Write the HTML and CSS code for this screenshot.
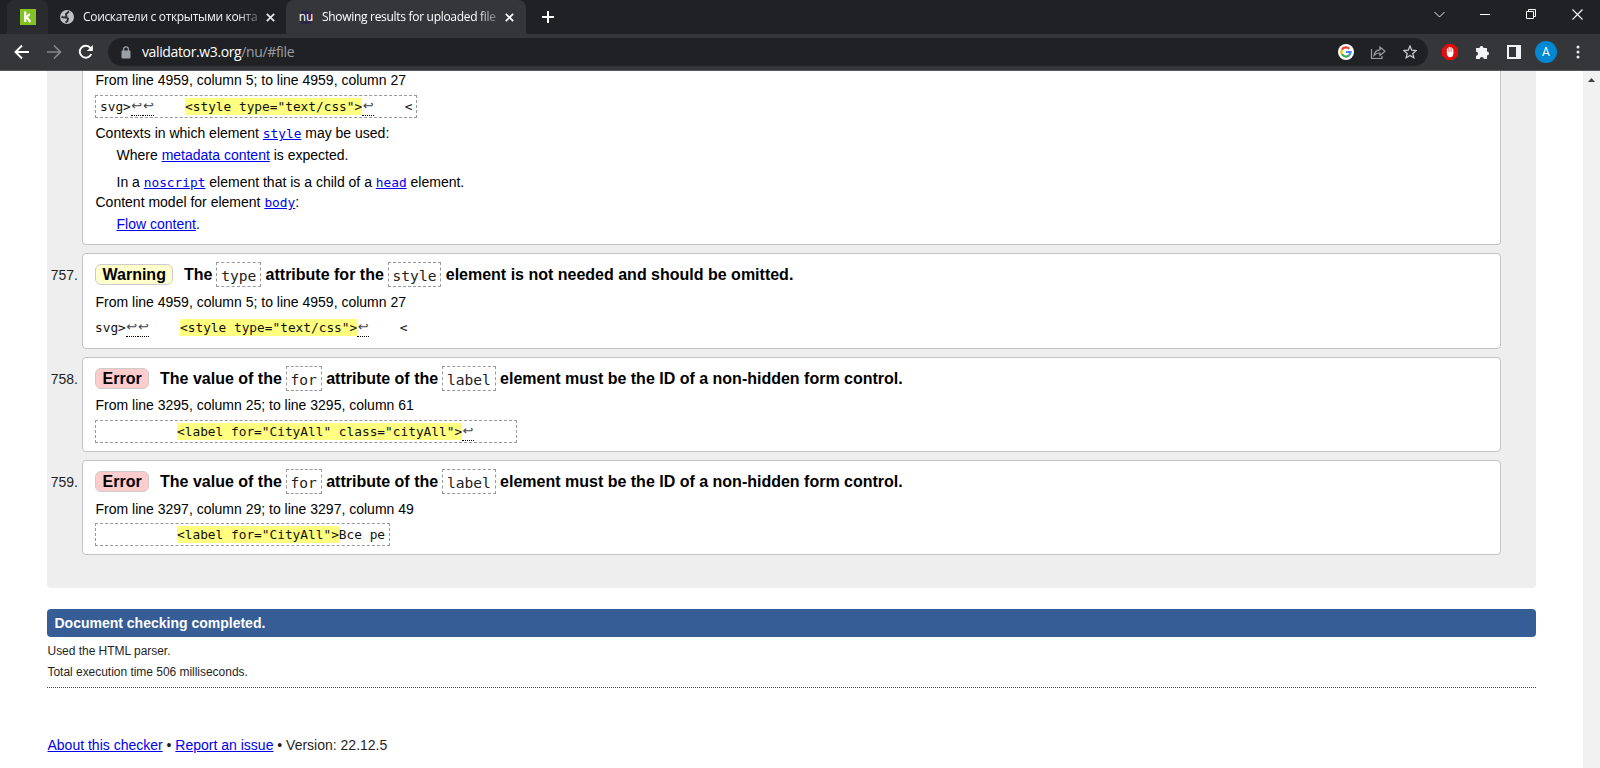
FILE: index.html
```html
<!DOCTYPE html>
<html lang="en">
<head>
<meta charset="utf-8">
<title>Showing results for uploaded file</title>
<link rel="stylesheet" href="styles.css">
</head>
<body>
<div class="browser">
  <header class="tabstrip">
    <div class="tab-pinned"><svg width="16" height="16" viewBox="0 0 16 16"><rect width="16" height="16" fill="#84c225"/><path d="M5.2 2.5V13M5.5 9l4.300-4M6.600 8l3.700 5" stroke="#fff" stroke-width="2.200" fill="none"/></svg></div>
    <div class="tab-idle">
      <svg width="14" height="14" viewBox="0 0 14 14"><circle cx="7" cy="7" r="7" fill="#bdc1c6"/><path d="M1.500 6.500q3 2.200 5 0l-.5-2.500 3-2.500M5 7l3 1.500-.5 2.500-2 1.500" stroke="#2b2c2f" stroke-width="1.900" fill="none"/></svg>
      <span class="tab-title t1">Соискатели с открытыми конта</span>
      <svg class="x" width="9" height="9" viewBox="0 0 9 9"><path d="M.8.8l7.400 7.400M8.200.8L.8 8.200" stroke="#e8eaed" stroke-width="1.700"/></svg>
    </div>
    <div class="tab-active">
      <span class="nu">nu</span>
      <span class="tab-title t2">Showing results for uploaded file</span>
      <svg class="x" width="9" height="9" viewBox="0 0 9 9"><path d="M.8.8l7.400 7.400M8.200.8L.8 8.200" stroke="#fff" stroke-width="1.700"/></svg>
    </div>
    <svg class="plus" width="12" height="12" viewBox="0 0 12 12"><path d="M6 0v12M0 6h12" stroke="#fff" stroke-width="2"/></svg>
    <div class="window-buttons">
      <svg width="11" height="11" viewBox="0 0 11 11"><path d="M.5 3l5 5 5-5" fill="none" stroke="#e8eaed"/></svg>
      <svg width="11" height="11" viewBox="0 0 11 11"><path d="M0 5.500h10" stroke="#fff"/></svg>
      <svg width="11" height="11" viewBox="0 0 11 11"><path d="M.5 2.500h7v7h-7zM2.500 2V.5h7v7H8" fill="none" stroke="#fff"/></svg>
      <svg width="11" height="11" viewBox="0 0 11 11"><path d="M.5.5l10 10M10.500.5l-10 10" stroke="#fff" stroke-width="1.100"/></svg>
    </div>
  </header>
  <nav class="toolbar">
    <svg class="back" width="16" height="16" viewBox="0 0 16 16"><path d="M15 8H2M8 1.500L1.500 8 8 14.500" fill="none" stroke="#fff" stroke-width="1.900"/></svg>
    <svg class="fwd" width="16" height="16" viewBox="0 0 16 16"><path d="M1 8h13M8 1.500L14.500 8 8 14.500" fill="none" stroke="#86888a" stroke-width="1.700"/></svg>
    <svg class="reload" width="16" height="16" viewBox="0 0 16 16"><path d="M13.300 10A6 6 0 1 1 12.500 4L14 5.500" fill="none" stroke="#fff" stroke-width="1.900"/><path d="M14.800 1v6H8.800z" fill="#fff"/></svg>
    <div class="omnibox">
      <svg class="lock" width="10" height="13" viewBox="0 0 10 13"><rect x=".5" y="4.500" width="9" height="8" rx="1" fill="#9aa0a6"/><path d="M2.600 5V3.200a2.400 2.400 0 0 1 4.800 0V5" fill="none" stroke="#9aa0a6" stroke-width="1.300"/></svg>
      <span class="url">validator.w3.org<span class="path">/nu/#file</span></span>
      <svg class="google" width="16" height="16" viewBox="0 0 16 16"><circle cx="8" cy="8" r="8" fill="#fff"/><g fill="none" stroke-width="2.200"><path d="M4 5.600A4.600 4.600 0 0 1 11.300 4.800" stroke="#ea4335"/><path d="M4 10.300A4.600 4.600 0 0 1 4 5.600" stroke="#fbbc05"/><path d="M11 11.400A4.600 4.600 0 0 1 4 10.300" stroke="#34a853"/><path d="M8 8h4.600A4.600 4.600 0 0 1 11 11.400" stroke="#4285f4"/></g></svg>
      <svg class="share" width="16" height="15" viewBox="0 0 16 15"><path d="M1.500 4v9.500h10.500V11M4 10.500C4.500 6.500 7 5 10 4.800V2l5 4.300-5 4.200V8C7.500 8 5.500 8.600 4 10.500z" fill="none" stroke="#9aa0a6" stroke-width="1.200"/></svg>
      <svg class="star" width="14" height="14" viewBox="0 0 14 14"><path d="M7 1l1.700 4.100 4.500.4-3.400 2.900 1 4.300L7 10.400l-3.800 2.300 1-4.300L.8 5.500l4.500-.4z" fill="none" stroke="#c4c7cb" stroke-width="1.300"/></svg>
    </div>
    <svg class="adblock" width="16" height="16" viewBox="0 0 16 16"><path d="M4.700 0h6.600L16 4.700v6.600L11.300 16H4.700L0 11.300V4.700z" fill="#e40d0d"/><path d="M5.500 9V5M7.200 7V3.400M8.900 7V3.700M10.600 9V5" stroke="#fff" stroke-width="1.300" stroke-linecap="round"/><path d="M4.900 7.500h6.400v2.500q-.6 3.300-3 3.300Q5.600 13.300 4.900 10z" fill="#fff"/></svg>
    <svg class="puzzle" width="15" height="15" viewBox="0 0 15 15"><path d="M1 3h3.500a2 2 0 1 1 4 0H12v3.500a2 2 0 1 1 0 4V14H8.800a2 2 0 0 0-4 0H1v-3.300a2 2 0 0 0 0-4z" fill="#f1f3f4"/></svg>
    <svg class="side" width="14" height="14" viewBox="0 0 14 14"><path fill-rule="evenodd" d="M0 0h14v14H0zM2 2v10h7V2z" fill="#f1f3f4"/></svg>
    <span class="avatar">A</span>
    <svg class="dots" width="4" height="14" viewBox="0 0 4 14"><g fill="#e8eaed"><circle cx="2" cy="2" r="1.500"/><circle cx="2" cy="7" r="1.500"/><circle cx="2" cy="12" r="1.500"/></g></svg>
  </nav>
  <div class="viewport">
    <main class="page">
      <section class="results">
        <div class="row"><div class="num"></div>
          <article class="card first">
            <p class="loc">From line 4959, column 5; to line 4959, column 27</p>
            <div class="extract boxed"><span>svg&gt;</span><i>↩</i><i>↩</i><span>    </span><b>&lt;style type="text/css"&gt;</b><i>↩</i><span>    &lt;</span></div>
            <p class="ctx c1">Contexts in which element <a class="m">style</a> may be used:</p>
            <p class="ctx c2 in">Where <a>metadata content</a> is expected.</p>
            <p class="ctx c3 in">In a <a class="m">noscript</a> element that is a child of a <a class="m">head</a> element.</p>
            <p class="ctx c4">Content model for element <a class="m">body</a>:</p>
            <p class="ctx c2 in"><a>Flow content</a>.</p>
          </article></div>
        <div class="row"><div class="num">757.</div>
          <article class="card tall">
            <h2><strong class="badge warning">Warning</strong><span class="msg">The <code>type</code> attribute for the <code>style</code> element is not needed and should be omitted.</span></h2>
            <p class="loc">From line 4959, column 5; to line 4959, column 27</p>
            <div class="extract"><span>svg&gt;</span><i>↩</i><i>↩</i><span>    </span><b>&lt;style type="text/css"&gt;</b><i>↩</i><span>    &lt;</span></div>
          </article></div>
        <div class="row"><div class="num">758.</div>
          <article class="card tight">
            <h2><strong class="badge error">Error</strong><span class="msg">The value of the <code>for</code> attribute of the <code>label</code> element must be the ID of a non-hidden form control.</span></h2>
            <p class="loc">From line 3295, column 25; to line 3295, column 61</p>
            <div class="extract boxed"><span>          </span><b>&lt;label for="CityAll" class="cityAll"&gt;</b><i>↩</i><span>     </span></div>
          </article></div>
        <div class="row"><div class="num">759.</div>
          <article class="card">
            <h2><strong class="badge error">Error</strong><span class="msg">The value of the <code>for</code> attribute of the <code>label</code> element must be the ID of a non-hidden form control.</span></h2>
            <p class="loc">From line 3297, column 29; to line 3297, column 49</p>
            <div class="extract boxed"><span>          </span><b>&lt;label for="CityAll"&gt;</b><span>Все ре</span></div>
          </article></div>
      </section>
      <div class="done">Document checking completed.</div>
      <div class="stats"><p>Used the HTML parser.</p><p>Total execution time 506 milliseconds.</p></div>
      <footer><a>About this checker</a> • <a>Report an issue</a> • Version: 22.12.5</footer>
    </main>
    <aside class="scrollbar"><svg width="7" height="4" viewBox="0 0 7 4"><path d="M0 4L3.500 0 7 4z" fill="#404040"/></svg></aside>
  </div>
</div>
</body>
</html>
```
FILE: styles.css
```css
* { box-sizing: border-box; }
body { margin: 0; background: #fff; }
svg { display: block; flex: none; }
p, h2 { margin: 0; }
.browser { width: 1600px; height: 768px; overflow: hidden; display: flex; flex-direction: column; }

.tabstrip { height: 34px; flex: none; background: #202124; display: flex; align-items: stretch; font: 12px "Open Sans", sans-serif; color: #f1f3f4; }
.tab-pinned { width: 41px; margin-left: 7px; padding: 9px 0 0 13px; background: #2a2b2e; border-radius: 8px 8px 0 0; }
.tab-idle { width: 238px; display: flex; align-items: center; padding-left: 12px; }
.tab-title { flex: none; white-space: nowrap; line-height: 20px; -webkit-mask-image: linear-gradient(90deg, #000 88%, rgba(0, 0, 0, .25)); mask-image: linear-gradient(90deg, #000 88%, rgba(0, 0, 0, .25)); }
.t1 { width: 176px; margin-left: 9px; letter-spacing: -.32px; }
.t2 { width: 176px; margin-left: 8px; color: #fff; letter-spacing: -.3px; }
.tab-idle .x { margin-left: 7px; }
.tab-active { width: 240px; background: #35363a; border-radius: 8px 8px 0 0; display: flex; align-items: center; padding-left: 12px; }
.nu { width: 16px; font: 11.500px/14px "DejaVu Sans", sans-serif; color: #fff; background: linear-gradient(#292848, #292848) center / 10px 13px no-repeat; text-align: center; }
.tab-active .x { margin-left: 7px; }
.plus { margin: 11px 0 0 16px; }
.window-buttons { margin-left: auto; padding: 9px 17px 0 0; display: flex; gap: 35px; }

.toolbar { height: 37px; flex: none; background: #35363a; border-bottom: 1px solid #57585b; display: flex; align-items: center; padding-left: 14px; }
.fwd { margin-left: 16px; }
.reload { margin-left: 16px; }
.omnibox { margin-left: 14px; width: 1320px; height: 28px; border-radius: 14px; background: #202124; display: flex; align-items: center; padding-left: 13px; font: 14px/20px "Open Sans", sans-serif; color: #fff; }
.url { margin-left: 11px; letter-spacing: -.37px; }
.path { color: #9aa0a6; }
.google { margin-left: auto; }
.share { margin-left: 16px; }
.star { margin: 0 11px 0 17px; }
.adblock { margin-left: 14px; }
.puzzle { margin-left: 17px; }
.side { margin-left: 17px; }
.avatar { width: 22px; height: 22px; margin-left: 14px; border-radius: 50%; background: #0288d1; color: #fff; font: 12px/22px Roboto, sans-serif; text-align: center; }
.dots { margin-left: 19px; }

.viewport { flex: 1; display: flex; min-height: 0; }
.page { flex: 1; padding: 0 47px; font: 14px/18px "Liberation Sans", Arial, sans-serif; color: #1f1f1f; }
.scrollbar { width: 17px; background: #f1f1f1; padding: 7px 0 0 5px; }
.results { height: 517px; background: #eee; border-radius: 0 0 4px 4px; padding-right: 35px; display: flex; flex-direction: column; gap: 8px; }
.row { display: flex; }
.num { width: 35px; padding: 12px 4px 0 0; font-size: 14px; line-height: 20px; text-align: right; }
.card { flex: 1; height: 95px; background: #fff; border: 1px solid #c4c4c4; border-radius: 4px; padding: 8px 12px 0; color: #000; white-space: nowrap; }
.first { height: 174px; border-top: 0; border-radius: 0 0 4px 4px; padding-top: 0; }
.tall { height: 96px; }
h2 { height: 25px; display: flex; align-items: flex-start; font-size: 16px; line-height: 19px; }
.badge { height: 21px; margin-top: 2px; border: 1px solid #ccc; border-radius: 6px; padding: 0 6.500px; }
.warning { background: #ffffcc; width: 78px; margin-right: 11px; }
.error { background: #ffcccc; width: 54px; margin-right: 11px; }
.msg { line-height: 25px; }
h2 code { display: inline-block; height: 25px; margin-left: -.5px; border: 1px dashed #999; padding: 0 3.800px; font: normal 14.600px/26px "DejaVu Sans Mono", monospace; vertical-align: -1px; color: #222; }
.loc { margin-top: 6px; height: 18px; padding-left: .5px; }
.first .loc { margin-top: 0; }
.tight .loc { margin-top: 5px; }
.extract { display: flex; width: max-content; height: 23px; margin-top: 5px; align-items: center; font: 12.800px/17px "DejaVu Sans Mono", monospace; white-space: pre; color: #111; }
.first .extract, .tight .extract { margin-top: 6px; }
.boxed { border: 1px dashed #999; padding: 0 4px; }
.extract b { font-weight: normal; background: #ffff80; }
.extract i { width: 11.700px; height: 18px; margin-top: 1px; font: 13px/16px "DejaVu Sans", sans-serif; text-align: center; border-bottom: 1px dotted #000; color: #444; }
.ctx { height: 18px; margin-top: 4px; padding-left: .5px; }
.c1 { margin-top: 6px; }
.c3 { margin-top: 9px; }
.c4 { margin-top: 2px; }
.in { padding-left: 21.500px; }
a { color: #0000ee; text-decoration: underline; }
.m { font: 12.800px/16px "DejaVu Sans Mono", monospace; }
.done { height: 28px; margin-top: 21px; padding-left: 7.500px; border-radius: 4px; background: #365d95; color: #fff; font-weight: bold; line-height: 28px; }
.stats { height: 51px; padding: 4px 0 0 .5px; border-bottom: 1px dotted #444; font-size: 12px; letter-spacing: -.03px; line-height: 21px; }
footer { padding: 47px 0 0 .5px; line-height: 20px; }
```
